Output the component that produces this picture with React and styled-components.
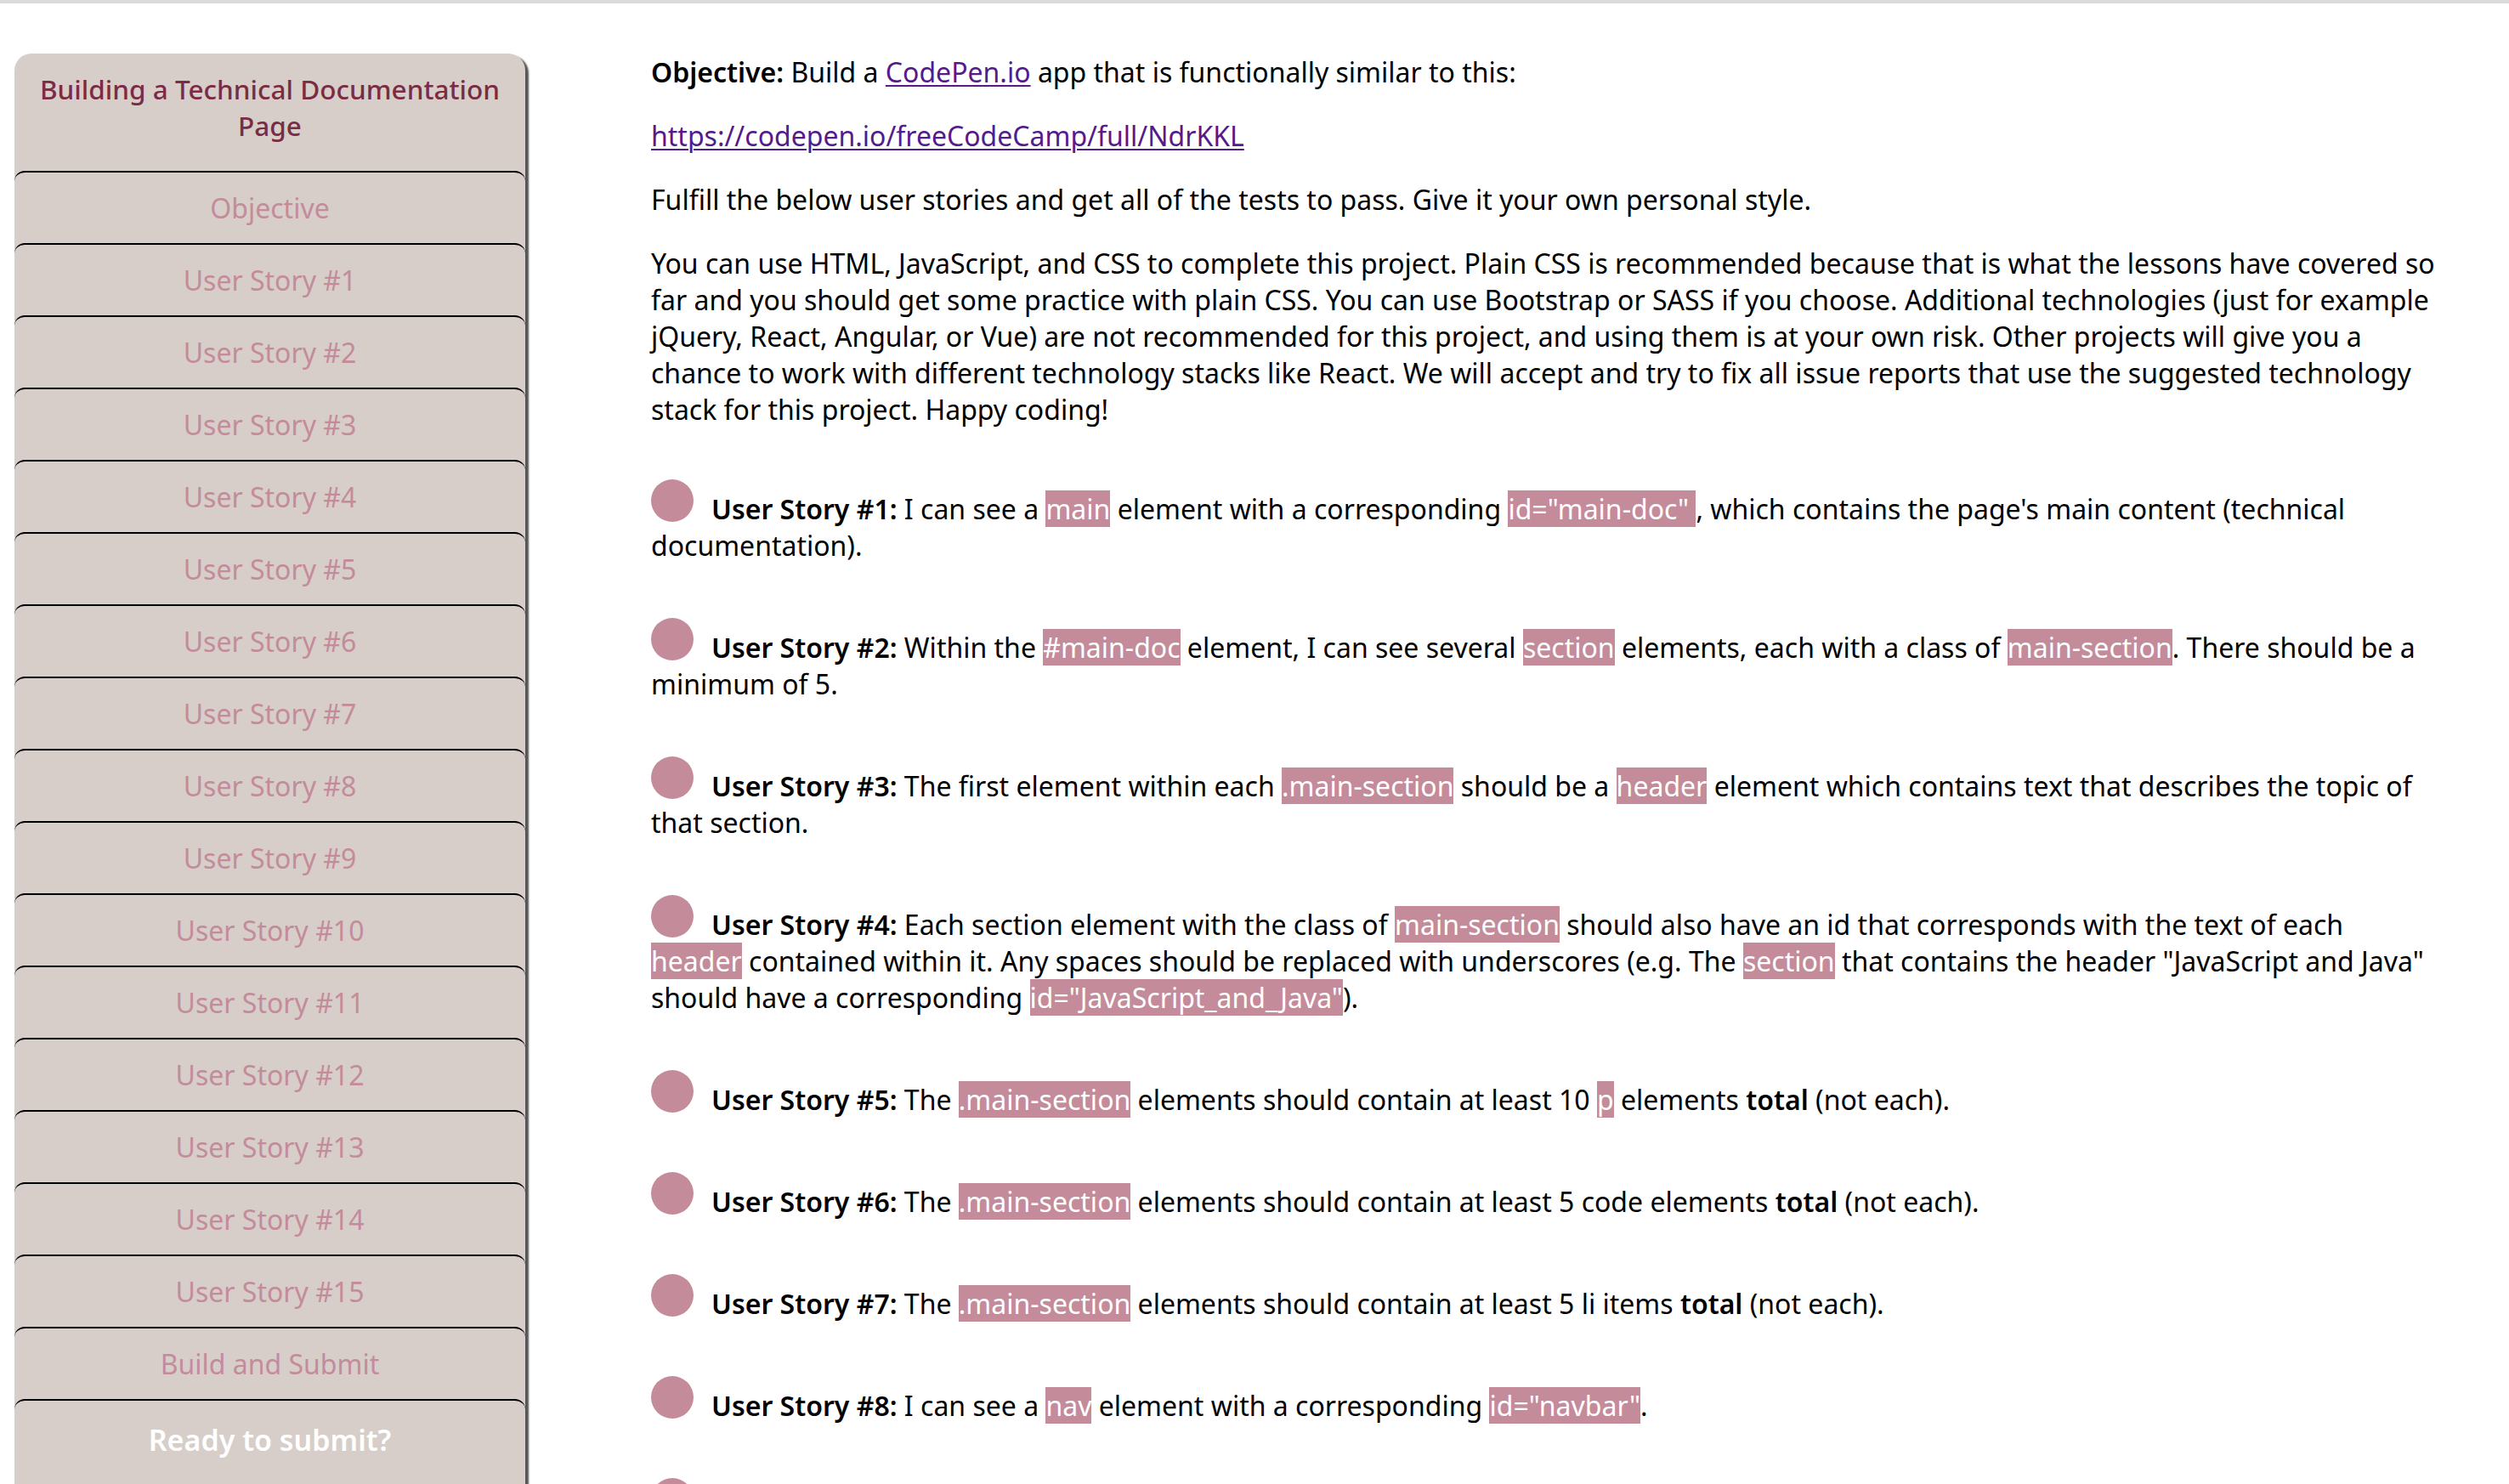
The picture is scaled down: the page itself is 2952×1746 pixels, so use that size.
import React from 'react';
import styled, { createGlobalStyle } from 'styled-components';

const pink = '#c48b9b';

const GlobalStyle = createGlobalStyle`
  html, body {
    margin: 0;
    padding: 0;
    background: #fff;
    font-family: "Noto Sans", "Open Sans", sans-serif;
    font-size: 32px;
    line-height: normal;
    color: #000;
  }
  b {
    font-weight: 600;
  }
`;

const Page = styled.div`
  display: flex;
  align-items: flex-start;
  height: 100vh;
  overflow: hidden;
  box-sizing: border-box;
  border-top: 4px solid #dadada;
`;

const Sidebar = styled.nav`
  flex-shrink: 0;
  width: 601px;
  margin: 59px 0 0 17px;
  padding-bottom: 80px;
  background: #d7cec9;
  border-radius: 20px 20px 0 0;
  box-shadow: 4px 3px 2px #555;
  text-align: center;
`;

const SideTitle = styled.header`
  padding: 20px 24px 32px;
  color: #7b2c45;
  font-size: 31.5px;
  line-height: 43px;
  font-weight: 500;
`;

const NavLink = styled.a`
  display: block;
  border-top: 2px solid #000;
  border-radius: 12px 12px 0 0;
  padding: ${p => (p.$ready ? '25px 0 15px' : '20px 0')};
  line-height: 43px;
  color: ${p => (p.$ready ? '#fff' : pink)};
  font-size: ${p => (p.$ready ? '34px' : '32px')};
  font-weight: ${p => (p.$ready ? 600 : 400)};
  text-decoration: none;
`;

const Main = styled.main`
  width: 2102px;
  margin-left: 148px;
  padding-top: 59px;
`;

const Para = styled.p`
  margin: 0 0 32px;
`;

const Link = styled.a`
  color: #551a8b;
  text-decoration: underline;
  text-decoration-thickness: 2px;
  text-underline-offset: 3px;
`;

const Stories = styled.ul`
  list-style: none;
  margin: 61px 0 0;
  padding: 0;
`;

const Story = styled.li`
  margin: 0 0 64px;
`;

const Dot = styled.span`
  display: inline-block;
  width: 50px;
  height: 50px;
  border-radius: 50%;
  background: ${pink};
  margin-right: 21px;
  vertical-align: -3px;
`;

const Code = styled.code`
  font-family: inherit;
  font-size: inherit;
  background: ${pink};
  color: #fff;
`;

const navItems = [
  'Objective',
  ...Array.from({ length: 15 }, (_, i) => `User Story #${i + 1}`),
  'Build and Submit',
];

const stories = [
  <>I can see a <Code>main</Code> element with a corresponding <Code>id="main-doc" </Code>, which contains the page's main content (technical documentation).</>,
  <>Within the <Code>#main-doc</Code> element, I can see several <Code>section</Code> elements, each with a class of <Code>main-section</Code>. There should be a minimum of 5.</>,
  <>The first element within each <Code>.main-section</Code> should be a <Code>header</Code> element which contains text that describes the topic of that section.</>,
  <>Each section element with the class of <Code>main-section</Code> should also have an id that corresponds with the text of each <Code>header</Code> contained within it. Any spaces should be replaced with underscores (e.g. The <Code>section</Code> that contains the header "JavaScript and Java" should have a corresponding <Code>id="JavaScript_and_Java"</Code>).</>,
  <>The <Code>.main-section</Code> elements should contain at least 10 <Code>p</Code> elements <b>total</b> (not each).</>,
  <>The <Code>.main-section</Code> elements should contain at least 5 code elements <b>total</b> (not each).</>,
  <>The <Code>.main-section</Code> elements should contain at least 5 li items <b>total</b> (not each).</>,
  <>I can see a <Code>nav</Code> element with a corresponding <Code>id="navbar"</Code>.</>,
  <>The navbar element should contain one <Code>header</Code> element which contains text that describes the topic of the technical documentation.</>,
];

export default function App() {
  return (
    <>
      <GlobalStyle />
      <Page>
        <Sidebar>
          <SideTitle>Building a Technical Documentation Page</SideTitle>
          {navItems.map(item => (
            <NavLink key={item} href="#">{item}</NavLink>
          ))}
          <NavLink $ready href="#">Ready to submit?</NavLink>
        </Sidebar>

        <Main>
          <Para>
            <b>Objective:</b> Build a <Link href="#">CodePen.io</Link> app that is functionally similar to this:
          </Para>
          <Para>
            <Link href="#">https://codepen.io/freeCodeCamp/full/NdrKKL</Link>
          </Para>
          <Para>Fulfill the below user stories and get all of the tests to pass. Give it your own personal style.</Para>
          <Para>
            You can use HTML, JavaScript, and CSS to complete this project. Plain CSS is recommended because that is what the lessons have covered so far and you should get some practice with plain CSS. You can use Bootstrap or SASS if you choose. Additional technologies (just for example jQuery, React, Angular, or Vue) are not recommended for this project, and using them is at your own risk. Other projects will give you a chance to work with different technology stacks like React. We will accept and try to fix all issue reports that use the suggested technology stack for this project. Happy coding!
          </Para>

          <Stories>
            {stories.map((text, i) => (
              <Story key={i}>
                <Dot />
                <b>User Story #{i + 1}:</b> {text}
              </Story>
            ))}
          </Stories>
        </Main>
      </Page>
    </>
  );
}
